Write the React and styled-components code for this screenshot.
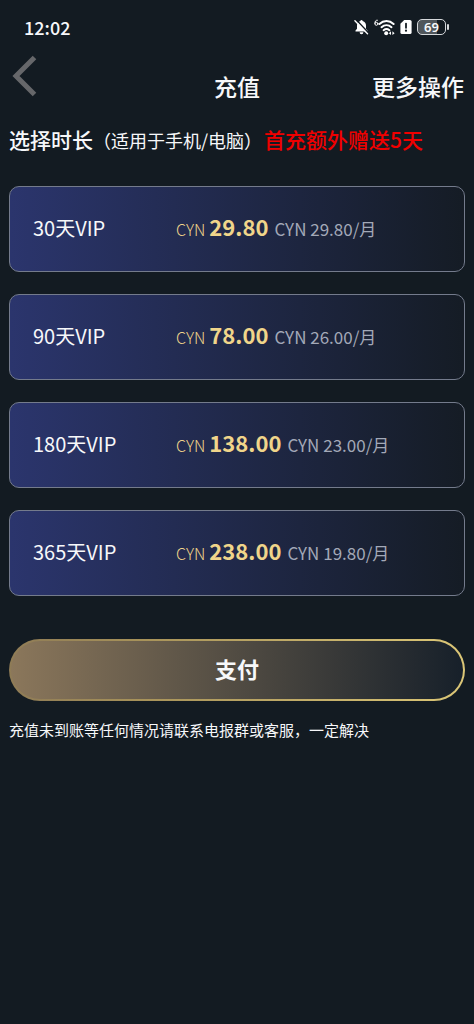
import React from "react";
import styled, { createGlobalStyle } from "styled-components";

const colors = {
  background: "#131b22",
  text: "#f7f8fa",
  muted: "#a3a9b8",
  gold: "#f0d58a",
  border: "#747b8c",
  promo: "#f00000",
};

const GlobalStyle = createGlobalStyle`
  *,
  *::before,
  *::after {
    box-sizing: border-box;
  }

  body {
    margin: 0;
    background: ${colors.background};
    color: ${colors.text};
    font-family: "Noto Sans CJK SC", sans-serif;
  }

  button {
    font-family: inherit;
    color: inherit;
    cursor: pointer;
  }
`;

/**
 * Status bar
 */
const StatusBar = styled.div`
  display: flex;
  align-items: center;
  justify-content: space-between;
  height: 54px;
  padding: 0 28px 0 24px;
`;

const Clock = styled.time`
  font-size: 18px;
  font-weight: 500;
  line-height: 24px;
`;

const StatusIcons = styled.div`
  display: flex;
  align-items: center;
  gap: 5px;

  svg {
    display: block;
  }
`;

const Battery = styled.span`
  position: relative;
  width: 29px;
  height: 16px;
  border: 1px solid #d5d8db;
  border-radius: 5px;
  background: linear-gradient(90deg, #50565b 69%, ${colors.background} 69%);
  font-family: "Noto Sans", sans-serif;
  font-size: 13px;
  font-weight: 600;
  line-height: 14px;
  text-align: center;

  &::after {
    content: "";
    position: absolute;
    top: 4px;
    right: -4px;
    width: 2px;
    height: 6px;
    border-radius: 1px;
    background: #d5d8db;
  }
`;

/**
 * Header
 */
const Header = styled.header`
  display: grid;
  grid-template-columns: 1fr auto 1fr;
  align-items: center;
  height: 64px;
  padding: 0 10px;
`;

const BackButton = styled.button`
  align-self: start;
  justify-self: start;
  padding: 0;
  border: 0;
  background: none;

  svg {
    display: block;
  }
`;

const Title = styled.h1`
  margin: 0;
  font-size: 23px;
  font-weight: 500;
  line-height: 32px;
`;

const MoreButton = styled.button`
  justify-self: end;
  padding: 0;
  border: 0;
  background: none;
  font-size: 23px;
  font-weight: 500;
  line-height: 32px;
  white-space: nowrap;
`;

/**
 * Plans
 */
const Main = styled.main`
  padding: 5px 9px;
`;

const SectionTitle = styled.h2`
  margin: 0 0 30px;
  font-size: 21px;
  font-weight: 500;
  line-height: 32px;
  white-space: nowrap;
`;

const Scope = styled.span`
  font-size: 18px;
  font-weight: 400;
`;

const Promo = styled.span`
  margin-left: 2px;
  color: ${colors.promo};
`;

const PlanList = styled.div`
  display: grid;
  gap: 22px;
`;

const PlanCard = styled.button`
  display: grid;
  grid-template-columns: 143px 1fr;
  align-items: center;
  width: 100%;
  height: 86px;
  padding: 0 23px 2px;
  border: 1px solid ${colors.border};
  border-radius: 10px;
  background: linear-gradient(90deg, #2b356d, #151c25);
  text-align: left;
`;

const PlanName = styled.span`
  font-size: 20px;
  line-height: 32px;
`;

const PlanPrice = styled.span`
  line-height: 32px;
  white-space: nowrap;
`;

const Currency = styled.span`
  color: ${colors.gold};
  font-size: 16px;
  font-weight: 300;
`;

const Amount = styled.strong`
  margin: 0 6px 0 4px;
  color: ${colors.gold};
  font-size: 22px;
  font-weight: 700;
`;

const Monthly = styled.span`
  color: ${colors.muted};
  font-size: 17px;
`;

/**
 * Payment
 */
const PayButton = styled.button`
  display: block;
  width: 100%;
  height: 62px;
  margin-top: 43px;
  padding: 0 0 4px;
  border: 2px solid transparent;
  border-radius: 31px;
  background:
    linear-gradient(90deg, #8b775b, #17202a) padding-box,
    linear-gradient(90deg, #8e7b56, #a8935a 30%, #dcc777) border-box;
  font-size: 22px;
  font-weight: 700;
  line-height: 32px;
`;

const Note = styled.p`
  margin: 17px 0 0;
  font-size: 15px;
  line-height: 24px;
`;

const BellOffIcon = () => (
  <svg width="15" height="16" viewBox="0 0 16 17" aria-hidden="true">
    <path
      d="M8 1a1.2 1.2 0 0 0-1.2 1.2C4.4 2.8 3.2 4.7 3.2 7v3.4L1.6 12.3v.9h12.8v-.9l-1.6-1.9V7c0-2.3-1.2-4.2-3.6-4.8A1.2 1.2 0 0 0 8 1zM6 14.2a2 2 0 0 0 4 0z"
      fill="#fff"
    />
    <path d="M2.3 .8l13.2 14" stroke={colors.background} strokeWidth="1.6" />
    <path d="M1 1.8l13.4 14" stroke="#fff" strokeWidth="1.5" strokeLinecap="round" />
  </svg>
);

const WifiIcon = () => (
  <svg width="21" height="17" viewBox="0 0 21 17" aria-hidden="true">
    <g fill="none" stroke="#fff" strokeLinecap="round">
      <path d="M3.4 1.2C1.6 1 .9 2.3 .9 4.4" strokeWidth="1" />
      <circle cx="2.4" cy="4.8" r="1.5" strokeWidth="1" />
      <path d="M5.4 5c4.2-3.9 10-3.900 14.200 0" strokeWidth="2" />
      <path d="M7.500 8.200c3-2.700 7-2.700 10 0" strokeWidth="2" />
      <path d="M9.600 11.200c1.800-1.500 4-1.500 5.800 0" strokeWidth="2" />
    </g>
    <circle cx="12.2" cy="14.2" r="2" fill="#fff" />
    <path d="M14.800 14.200l2.200-1.900v3.800zM20.600 14.200l-2.200-1.900v3.800z" fill="#fff" />
  </svg>
);

const SimIcon = () => (
  <svg width="12" height="16" viewBox="0 0 12 16" aria-hidden="true">
    <path
      d="M4.2 1H10a1.6 1.6 0 0 1 1.6 1.6v10.8A1.6 1.6 0 0 1 10 15H2a1.6 1.6 0 0 1-1.6-1.6V4.8z"
      fill="#fff"
    />
    <path d="M6 4.6v4.2" stroke={colors.background} strokeWidth="1.8" strokeLinecap="round" />
    <circle cx="6" cy="11.7" r="1.1" fill={colors.background} />
  </svg>
);

const BackIcon = () => (
  <svg width="28" height="44" viewBox="0 0 28 44" aria-hidden="true">
    <path d="M24.5 3.5L6 22l18.5 18.5" fill="none" stroke="#66676a" strokeWidth="5" />
  </svg>
);

const PLANS = [
  { days: 30, price: "29.80", monthly: "29.80" },
  { days: 90, price: "78.00", monthly: "26.00" },
  { days: 180, price: "138.00", monthly: "23.00" },
  { days: 365, price: "238.00", monthly: "19.80" },
];

const Plan = ({ days, price, monthly }) => (
  <PlanCard type="button">
    <PlanName>{days}天VIP</PlanName>
    <PlanPrice>
      <Currency>CYN</Currency>
      <Amount>{price}</Amount>
      <Monthly>CYN {monthly}/月</Monthly>
    </PlanPrice>
  </PlanCard>
);

const App = () => (
  <>
    <GlobalStyle />
    <StatusBar>
      <Clock>12:02</Clock>
      <StatusIcons>
        <BellOffIcon />
        <WifiIcon />
        <SimIcon />
        <Battery>69</Battery>
      </StatusIcons>
    </StatusBar>
    <Header>
      <BackButton type="button" aria-label="返回">
        <BackIcon />
      </BackButton>
      <Title>充值</Title>
      <MoreButton type="button">更多操作</MoreButton>
    </Header>
    <Main>
      <SectionTitle>
        选择时长<Scope>（适用于手机/电脑）</Scope>
        <Promo>首充额外赠送5天</Promo>
      </SectionTitle>
      <PlanList>
        {PLANS.map((plan) => (
          <Plan key={plan.days} {...plan} />
        ))}
      </PlanList>
      <PayButton type="button">支付</PayButton>
      <Note>充值未到账等任何情况请联系电报群或客服，一定解决</Note>
    </Main>
  </>
);

export default App;
